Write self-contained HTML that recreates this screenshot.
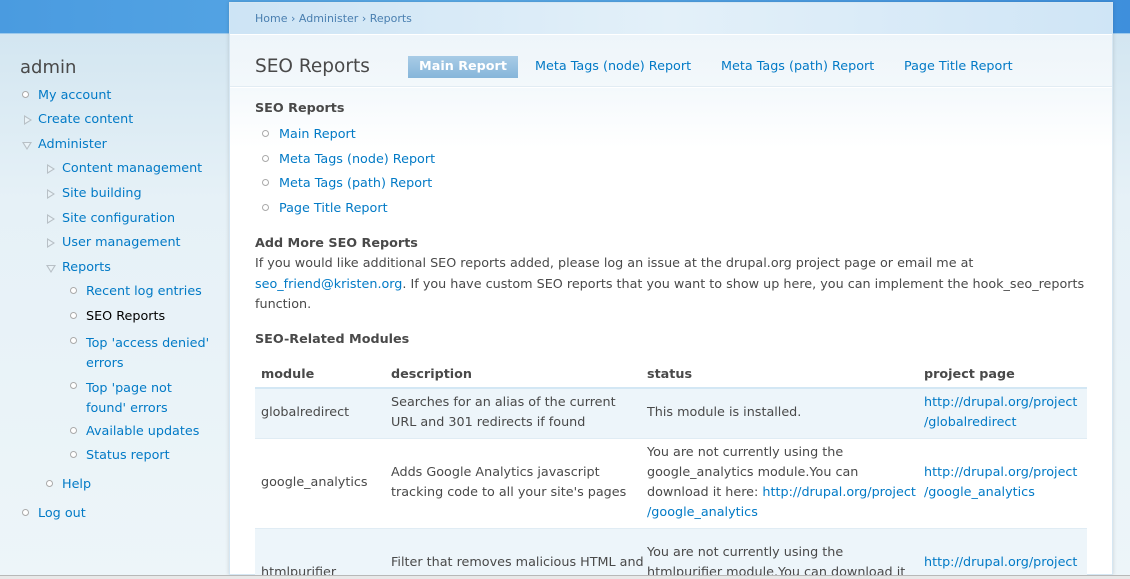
<!DOCTYPE html>
<html style="width:1130px;height:579px;overflow:hidden"><head><meta charset="utf-8"><style>
*{margin:0;padding:0;box-sizing:border-box}
body{width:1130px;height:579px;overflow:hidden;position:relative;font-family:"DejaVu Sans","Liberation Sans",sans-serif;font-size:12.75px;color:#494949;background:linear-gradient(#d3e6f1 34px,#e6f1f7 200px,#edf5f9 579px)}
a{color:#027ac6;text-decoration:none}
.t{position:absolute;white-space:nowrap;line-height:16px}
.top{position:absolute;left:0;top:0;width:1130px;height:34px;background:linear-gradient(90deg,#4a9be0,#5aaae6 40%,#3e8fdc);border-bottom:1px solid #9cc9ec}
.panel{position:absolute;left:229px;top:2px;width:884px;height:573px;background:#fff;border:1px solid #d6e7f3;box-shadow:0 0 4px rgba(0,0,0,.15)}
.bc{position:absolute;left:0;top:0;width:882px;height:32px;background:linear-gradient(90deg,#cde4f5,#e3f0f9 50%,#cfe5f6);border-bottom:1px solid #fff}
.hd{position:absolute;left:0;top:32px;width:882px;height:52px;background:linear-gradient(#eef5fa,#f3f8fb);border-bottom:1px solid #e2ecf3}
.fade{position:absolute;left:0;top:85px;width:882px;height:60px;background:linear-gradient(#f4f9fc,#fff)}
.w{position:absolute;left:0;top:0;width:1130px;height:575px;overflow:hidden}
.w2{position:absolute;left:0;top:6px;width:1130px;height:569px}
.ic{position:absolute;width:7px;height:7px;border:1px solid #aaa;border-radius:50%;background:#fff}
.tri{position:absolute;width:0;height:0;border-top:5px solid transparent;border-bottom:5px solid transparent;border-left:8px solid #b8c0c6}
.tri:after{content:"";position:absolute;left:-7px;top:-3px;border-top:3px solid transparent;border-bottom:3px solid transparent;border-left:5px solid #eaf3f8}
.trd{position:absolute;width:0;height:0;border-left:5px solid transparent;border-right:5px solid transparent;border-top:8px solid #b8c0c6}
.trd:after{content:"";position:absolute;top:-7px;left:-3px;border-left:3px solid transparent;border-right:3px solid transparent;border-top:5px solid #eaf3f8}
.tab{position:absolute;left:408px;top:50px;width:110px;height:22px;background:linear-gradient(#a8cce6,#86b6da);color:#fff;font-weight:bold;text-align:center;line-height:22px}
table{position:absolute;left:255px;top:356px;border-collapse:collapse;width:832px;table-layout:fixed}
th{text-align:left;font-weight:bold;height:26px;padding:0 6px;border-bottom:2px solid #d3e7f4;vertical-align:middle}
td{padding:2px 6px;line-height:20px;border-bottom:1px solid #e0ecf4;vertical-align:middle}
tr.o td{background:#edf5fa}
</style></head><body>
<div class="top"></div>
<div class="panel"><div class="bc"></div><div class="hd"></div><div class="fade"></div></div>
<div class="w"><div class="w2">
<div class="t" style="left:255px;top:5px;font-size:11px;color:#4a7fb0">Home › Administer › Reports</div>
<div class="t" style="left:255px;top:50px;font-size:18.5px;line-height:22px;color:#494949">SEO Reports</div>
<div class="tab">Main Report</div>
<a class="t" style="left:535px;top:53px">Meta Tags (node) Report</a>
<a class="t" style="left:721px;top:53px">Meta Tags (path) Report</a>
<a class="t" style="left:904px;top:53px">Page Title Report</a>

<div class="t" style="left:20px;top:51px;font-size:18px;line-height:22px;color:#494949">admin</div>
<span class="ic" style="left:22px;top:85px"></span><a class="t" style="left:38px;top:82px">My account</a>
<span class="tri" style="left:24px;top:109px"></span><a class="t" style="left:38px;top:106px">Create content</a>
<span class="trd" style="left:22px;top:136px"></span><a class="t" style="left:38px;top:131px">Administer</a>
<span class="tri" style="left:47px;top:158px"></span><a class="t" style="left:62px;top:155px">Content management</a>
<span class="tri" style="left:47px;top:183px"></span><a class="t" style="left:62px;top:180px">Site building</a>
<span class="tri" style="left:47px;top:208px"></span><a class="t" style="left:62px;top:205px">Site configuration</a>
<span class="tri" style="left:47px;top:232px"></span><a class="t" style="left:62px;top:229px">User management</a>
<span class="trd" style="left:46px;top:259px"></span><a class="t" style="left:62px;top:254px">Reports</a>
<span class="ic" style="left:70px;top:281px"></span><a class="t" style="left:86px;top:278px">Recent log entries</a>
<span class="ic" style="left:70px;top:306px"></span><span class="t" style="left:86px;top:303px;color:#000">SEO Reports</span>
<span class="ic" style="left:70px;top:331px"></span><a class="t" style="left:86px;top:328px;line-height:20px;white-space:normal;width:130px">Top 'access denied' errors</a>
<span class="ic" style="left:70px;top:376px"></span><a class="t" style="left:86px;top:373px;line-height:20px;white-space:normal;width:110px">Top 'page not found' errors</a>
<span class="ic" style="left:70px;top:421px"></span><a class="t" style="left:86px;top:418px">Available updates</a>
<span class="ic" style="left:70px;top:445px"></span><a class="t" style="left:86px;top:442px">Status report</a>
<span class="ic" style="left:46px;top:474px"></span><a class="t" style="left:62px;top:471px">Help</a>
<span class="ic" style="left:22px;top:503px"></span><a class="t" style="left:38px;top:500px">Log out</a>

<div class="t" style="left:255px;top:95px;font-weight:bold">SEO Reports</div>
<span class="ic" style="left:262px;top:124px"></span><a class="t" style="left:279px;top:121px">Main Report</a>
<span class="ic" style="left:262px;top:149px"></span><a class="t" style="left:279px;top:146px">Meta Tags (node) Report</a>
<span class="ic" style="left:262px;top:173px"></span><a class="t" style="left:279px;top:170px">Meta Tags (path) Report</a>
<span class="ic" style="left:262px;top:198px"></span><a class="t" style="left:279px;top:195px">Page Title Report</a>
<div class="t" style="left:255px;top:230px;font-weight:bold">Add More SEO Reports</div>
<div class="t" style="left:255px;top:248px;line-height:20.5px;white-space:normal;width:830px">If you would like additional SEO reports added, please log an issue at the drupal.org project page or email me at <a>seo_friend@kristen.org</a>. If you have custom SEO reports that you want to show up here, you can implement the hook_seo_reports function.</div>
<div class="t" style="left:255px;top:326px;font-weight:bold">SEO-Related Modules</div>
<table>
<colgroup><col style="width:130px"><col style="width:256px"><col style="width:277px"><col style="width:169px"></colgroup>
<tr><th>module</th><th>description</th><th>status</th><th>project page</th></tr>
<tr class="o" style="height:50px"><td>globalredirect</td><td>Searches for an alias of the current URL and 301 redirects if found</td><td>This module is installed.</td><td><a>http://drupal.org/project<br>/globalredirect</a></td></tr>
<tr style="height:90px"><td>google_analytics</td><td>Adds Google Analytics javascript tracking code to all your site's pages</td><td style="padding-right:0">You are not currently using the google_analytics module.You can download it here: <a style="white-space:nowrap">http://drupal.org/project</a><br><a>/google_analytics</a></td><td><a>http://drupal.org/project<br>/google_analytics</a></td></tr>
<tr class="o" style="height:90px"><td>htmlpurifier</td><td style="padding-right:0;white-space:nowrap">Filter that removes malicious HTML and<br>ensures standards compliant output</td><td style="padding-right:0">You are not currently using the htmlpurifier module.You can download it here:</td><td><a>http://drupal.org/project<br>/htmlpurifier</a></td></tr>
</table>
</div></div>
<div style="position:absolute;left:0;top:575px;width:1130px;height:4px;background:#e8e8e8;border-top:1px solid #b8b8b8"></div>
</body></html>
